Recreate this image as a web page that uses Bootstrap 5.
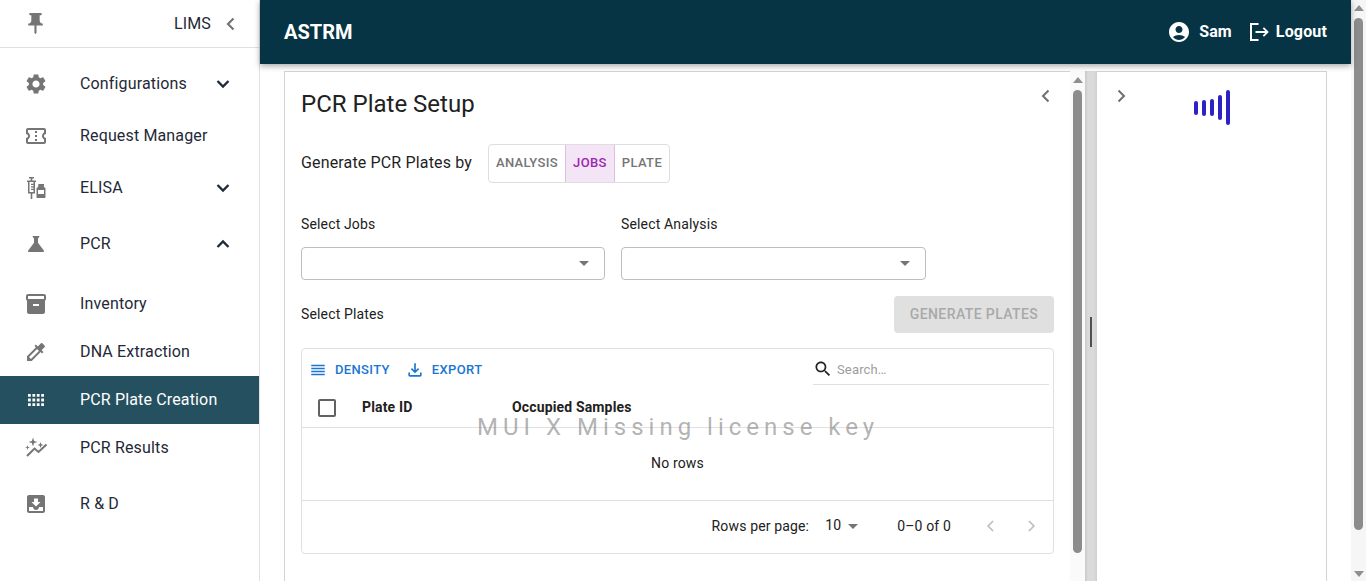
<!DOCTYPE html>
<html lang="en">
<head>
<meta charset="utf-8">
<title>ASTRM</title>
<link href="https://cdn.jsdelivr.net/npm/bootstrap@5.3.0/dist/css/bootstrap.min.css" rel="stylesheet">
<style>
html,body{height:581px;overflow:hidden;background:#fff}
body{font-family:Roboto,"Liberation Sans",sans-serif;color:#1f1f1f;font-size:16px;letter-spacing:.15px}
.shell{height:581px;width:1366px}
.side{width:260px;border-right:1px solid #e0e0e0;flex:none}
.side-top{height:48px;border-bottom:1px solid #e0e0e0;padding:0 16px 0 23px}
.lims{margin-left:auto;margin-right:8px;color:#1f2937}
.side-list{padding-top:10px}
.s-item{height:52px;padding:0 24px;color:#1f2937}
.s-item.h48{height:48px}
.s-item.h56{height:56px}
.s-item .lbl{margin-left:32px}
.s-item svg.ic{width:24px;height:24px;fill:#757575;flex:none}
.s-item .car{margin-left:auto;width:24px;height:24px;fill:none;stroke:#1f2937;stroke-width:2.3}
.s-item.on{background:#255060;color:#fff}
.s-item.on svg.ic{fill:#fff}
.gap-pcr{height:6px}
.gap-inv{height:12px}
.gap-rd{height:4px}
.rt{flex:1;min-width:0}
.topbar{height:64px;background:#073444;color:#fff;padding:0 24px;box-shadow:0 2px 6px rgba(0,0,0,.35);position:relative;z-index:2;font-weight:700}
.brand{font-size:20px;font-weight:700;letter-spacing:0}
.topbar svg{fill:#fff;flex:none}
.sam{margin-left:8px;margin-right:15px}
.out{margin-left:5px}
.pg-sb{width:15px;background:#f6f6f6;flex:none;padding-top:5px;position:relative}
.arw{width:0;height:0;border-left:5px solid transparent;border-right:5px solid transparent;border-bottom:6px solid #8f8f8f;margin:0 auto}
.arw-dn{position:absolute;left:3px;top:571px;width:0;height:0;border-left:5px solid transparent;border-right:5px solid transparent;border-top:6px solid #8f8f8f}
.pg-thumb{width:9px;height:512px;background:#8c8c8c;border-radius:5px;margin:7px auto 0}
.work{height:517px;overflow:hidden;padding:7px 24px 0}
.pane-l{width:786px;border:1px solid #d4d4d4;border-right:0;border-bottom:0;flex:none;height:510px;position:relative;padding:16px 16px 0}
.inner-sb{width:15px;background:#fafafa;flex:none;padding-top:6px}
.inner-thumb{width:9px;height:463px;background:#8c8c8c;border-radius:5px;margin:7px auto 0}
.splitter{width:12px;background:linear-gradient(90deg,#c9c9c9,#dadada 25%,#dadada 75%,#cfcfcf);flex:none}
.grip{width:2px;height:30px;background:#4f4f4f;margin-top:246px}
.pane-r{width:230px;border:1px solid #d4d4d4;border-left:0;border-bottom:0;flex:none;height:510px;position:relative;padding-top:16px}
.pane-title{font-size:24px;line-height:32px;color:#212121;margin:0;font-weight:400;letter-spacing:0}
.back{position:absolute;top:12px;right:12px;width:24px;height:24px;fill:none;stroke:#707070;stroke-width:2}
.back.fwd{left:12px;right:auto}
.by-row{margin-top:24px;height:39px;width:370px}
.by-txt{margin-top:-2px}
.toggle{border:1px solid #dedede;border-radius:4px;height:39px;margin-left:16px;overflow:hidden;flex:none}
.toggle span{font-size:13px;font-weight:500;letter-spacing:.35px;color:#757575;line-height:35px;display:block;text-align:center}
.toggle .t1{width:76px}
.toggle .t2{width:50px;background:#f3e5f5;color:#9c27b0;border-left:1px solid #dcbfe2;border-right:1px solid #dcbfe2}
.toggle .t3{width:54px}
.sel-row{margin-top:21px;gap:16px}
.sel-col{width:304px}
.sel-col.two{width:305px}
.sel-lbl{font-size:14px;line-height:40px;height:40px;margin-bottom:3px;color:#212121}
.fake-sel{height:33px;border:1px solid #bdbdbd;border-radius:4px;padding-right:15px}
.tri{width:0;height:0;border-left:5px solid transparent;border-right:5px solid transparent;border-top:5px solid #757575}
.gen-row{margin-top:16px;height:37px;width:753px}
.plates{font-size:14px;color:#212121}
.gen{background:#e0e0e0;color:#a9a9a9;font-size:14px;font-weight:500;letter-spacing:.4px;border:0;border-radius:4px;height:37px;width:160px;padding:0}
.gridbox{margin-top:15px;width:753px;height:206px;border:1px solid #e0e0e0;border-radius:4px;position:relative}
.tb{height:36px;padding:0 4px 0 7px}
.tb-btn{color:#1976d2;font-size:13px;font-weight:500;letter-spacing:.35px;margin-top:6px}
.tb-btn svg{fill:#1976d2;width:18px;height:18px;margin-right:8px}
.tb-btn svg.exp{width:20px;height:20px;margin:0 7px 0 -1px}
.srch{width:236px;height:36px;border-bottom:1px solid #e0e0e0;margin-left:auto;padding-top:7px;font-size:13px;color:#9e9e9e}
.srch svg{width:20px;height:20px;fill:#212121;margin-right:4px;margin-top:-2px}
.gh{height:43px;border-bottom:1px solid #e0e0e0;font-size:14px;font-weight:700;color:#212121;padding:4px 0 0 16px}
.gh-txt{margin-top:-2px}
.cb{width:18px;height:18px;border:2px solid #616161;border-radius:2px;flex:none}
.gh .c1{margin-left:26px;width:150px}
.norows{height:73px;border-bottom:1px solid #e0e0e0;font-size:14px;color:#212121;padding-bottom:2px}
.gf{height:52px;font-size:14px;color:#212121;padding:0 12px 2px 0}
.gf .rp{margin-left:auto}
.gf .ten{margin-left:16px;margin-top:-2px}
.gf .tri{margin-left:7px}
.gf .cnt{margin-left:39px}
.gf svg{width:20px;height:20px;fill:none;stroke:#bdbdbd;stroke-width:2}
.gf svg.pv{margin-left:30px}
.gf svg.nx{margin-left:20px}
.wm{position:absolute;left:175px;top:63px;font-size:24px;letter-spacing:5px;color:rgba(130,130,130,.62);white-space:nowrap;line-height:30px;font-weight:400;pointer-events:none}
.loader{position:absolute;left:97px;top:18px;gap:4px;align-items:center}
.loader i{display:block;width:4px;background:#2f22c2;border-radius:2px}
</style>
</head>
<body>
<div class="shell d-flex">
  <nav class="side">
    <div class="side-top d-flex align-items-center">
      <svg width="25" height="25" viewBox="0 0 24 24" fill="#757575"><path d="M16 9V4h1c.55 0 1-.45 1-1s-.45-1-1-1H7c-.55 0-1 .45-1 1s.45 1 1 1h1v5c0 1.660-1.340 3-3 3v2h5.970v7l1 1 1-1v-7H19v-2c-1.660 0-3-1.340-3-3z"/></svg>
      <span class="lims">LIMS</span>
      <svg width="24" height="24" viewBox="0 0 24 24" fill="none" stroke="#757575" stroke-width="2.200"><path d="M14.500 6.500l-5.500 5.500 5.500 5.500"/></svg>
    </div>
    <div class="side-list">
      <div class="s-item d-flex align-items-center">
        <svg class="ic" viewBox="0 0 24 24"><path d="M19.140 12.940c.04-.3.06-.61.06-.94 0-.32-.02-.64-.07-.94l2.030-1.580c.18-.14.23-.41.12-.61l-1.920-3.320c-.12-.22-.37-.29-.59-.22l-2.390.96c-.5-.38-1.030-.7-1.620-.94l-.36-2.540c-.04-.24-.24-.41-.48-.41h-3.840c-.24 0-.43.17-.47.41l-.36 2.540c-.59.24-1.130.57-1.620.94l-2.390-.96c-.22-.08-.47 0-.59.22L2.740 8.870c-.12.21-.08.47.12.61l2.030 1.580c-.05.3-.09.63-.09.94s.02.64.07.94l-2.030 1.580c-.18.14-.23.41-.12.61l1.920 3.320c.12.22.37.29.59.22l2.390-.96c.5.38 1.030.7 1.620.94l.36 2.540c.05.24.24.41.48.41h3.840c.24 0 .44-.17.47-.41l.36-2.540c.59-.24 1.130-.56 1.620-.94l2.390.96c.22.08.47 0 .59-.22l1.920-3.320c.12-.22.07-.47-.12-.61l-2.010-1.580zM12 15.600c-1.980 0-3.600-1.620-3.600-3.600s1.620-3.600 3.600-3.600 3.600 1.620 3.600 3.600-1.620 3.600-3.600 3.600z"/></svg>
        <span class="lbl">Configurations</span>
        <svg class="car" viewBox="0 0 24 24"><path d="M6.500 9l5.500 5.500L17.500 9"/></svg>
      </div>
      <div class="s-item d-flex align-items-center">
        <svg class="ic" viewBox="0 0 24 24"><path d="M22 10V6c0-1.100-.9-2-2-2H4c-1.100 0-1.990.9-1.990 2v4c1.100 0 1.990.9 1.990 2s-.89 2-2 2v4c0 1.100.9 2 2 2h16c1.100 0 2-.9 2-2v-4c-1.100 0-2-.9-2-2s.9-2 2-2zm-2-1.460c-1.190.69-2 1.990-2 3.460s.81 2.770 2 3.460V18H4v-2.540c1.190-.69 2-1.990 2-3.460 0-1.480-.8-2.770-1.990-3.460L4 6h16v2.540zM11 15h2v2h-2zm0-4h2v2h-2zm0-4h2v2h-2z"/></svg>
        <span class="lbl">Request Manager</span>
      </div>
      <div class="s-item d-flex align-items-center">
        <svg class="ic" viewBox="0 0 24 24"><path d="M5 1h5v1.500H8.300V4.500H12V6h-1v11.500H8.300V23H6.700v-5.500H4V6H3V4.500h3.700V2.500H5zM5.500 6v10h4v-2H7v-1.200h2.500v-1.300H7v-1.200h2.500V9H7V7.800h2.500V6zM14.500 8h5.500v2.500h-.5l2 1.800V21c0 .6-.4 1-1 1h-7c-.6 0-1-.4-1-1v-8.700l2-1.800h-.5zM14 14v4h6v-4z" fill-rule="evenodd"/></svg>
        <span class="lbl">ELISA</span>
        <svg class="car" viewBox="0 0 24 24"><path d="M6.500 9l5.500 5.500L17.500 9"/></svg>
      </div>
      <div class="gap-pcr"></div>
      <div class="s-item h48 d-flex align-items-center">
        <svg class="ic" viewBox="0 0 24 24"><path d="M19.800 18.400L14 10.670V6.500l1.350-1.690c.26-.33.030-.81-.39-.81H9.040c-.42 0-.65.48-.39.81L10 6.500v4.170L4.200 18.400c-.49.66-.02 1.600.8 1.600h14c.82 0 1.290-.94.800-1.600z"/></svg>
        <span class="lbl">PCR</span>
        <svg class="car" viewBox="0 0 24 24"><path d="M6.500 15l5.500-5.500 5.500 5.500"/></svg>
      </div>
      <div class="gap-inv"></div>
      <div class="s-item h48 d-flex align-items-center">
        <svg class="ic" viewBox="0 0 24 24"><path d="M20 2H4c-1 0-2 .9-2 2v3.010c0 .72.43 1.340 1 1.690V20c0 1.100 1.100 2 2 2h14c.9 0 2-.9 2-2V8.700c.57-.35 1-.97 1-1.690V4c0-1.100-1-2-2-2zm-5 12H9v-2h6v2zm5-7H4V4l16-.02V7z"/></svg>
        <span class="lbl">Inventory</span>
      </div>
      <div class="s-item h48 d-flex align-items-center">
        <svg class="ic" viewBox="0 0 24 24"><path d="M20.710 5.630l-2.340-2.340a.996.996 0 0 0-1.410 0l-3.120 3.120-1.930-1.910-1.410 1.410 1.420 1.420L3 16.250V21h4.750l8.920-8.920 1.420 1.420 1.410-1.410-1.920-1.920 3.120-3.120c.4-.4.400-1.030.010-1.420zM6.920 19L5 17.080l8.060-8.060 1.920 1.920L6.920 19z"/></svg>
        <span class="lbl">DNA Extraction</span>
      </div>
      <div class="s-item h48 on d-flex align-items-center">
        <svg class="ic" viewBox="0 0 24 24"><path d="M4 6h2.800v2.800H4zm4.400 0h2.800v2.800H8.400zm4.400 0h2.800v2.800h-2.800zM17.200 6H20v2.800h-2.800zM4 10.600h2.800v2.800H4zm4.400 0h2.800v2.800H8.400zm4.400 0h2.800v2.800h-2.800zm4.400 0H20v2.800h-2.800zM4 15.200h2.800V18H4zm4.400 0h2.800V18H8.400zm4.400 0h2.800V18h-2.800zm4.400 0H20V18h-2.800z"/></svg>
        <span class="lbl">PCR Plate Creation</span>
      </div>
      <div class="s-item h48 d-flex align-items-center">
        <svg class="ic" viewBox="0 0 24 24"><path d="M3 20l7.500-7.500 4 3.500L22.500 8.500" fill="none" stroke="#757575" stroke-width="2"/><path d="M9 1.500l1.100 3.400 3.400 1.100-3.400 1.100L9 10.500 7.900 7.100 4.500 6l3.400-1.100zM16.500 6l.8 2.200 2.200.8-2.200.8-.8 2.200-.8-2.200-2.200-.8 2.200-.8zM3.500 9l.6 1.900L6 11.500l-1.900.6-.6 1.900-.6-1.900-1.900-.6 1.900-.6z"/></svg>
        <span class="lbl">PCR Results</span>
      </div>
      <div class="gap-rd"></div>
      <div class="s-item h56 d-flex align-items-center">
        <svg class="ic" viewBox="0 0 24 24"><path d="M19 3H5c-1.100 0-2 .9-2 2v14c0 1.100.9 2 2 2h14c1.100 0 2-.9 2-2V5c0-1.100-.9-2-2-2z"/><path d="M5 15h4c0 1.660 1.350 3 3 3s3-1.340 3-3h4v4H5z" fill="#fff"/><path d="M10 6.500v3.500H7.500l4.500 4.500 4.500-4.500H14V6.500z" fill="#fff"/></svg>
        <span class="lbl">R &amp; D</span>
      </div>
    </div>
  </nav>
  <div class="rt d-flex flex-column">
    <header class="topbar d-flex align-items-center">
      <span class="brand">ASTRM</span>
      <svg class="ms-auto" width="24" height="24" viewBox="0 0 24 24"><path d="M12 2C6.480 2 2 6.480 2 12s4.480 10 10 10 10-4.480 10-10S17.520 2 12 2zm0 4c1.930 0 3.500 1.570 3.500 3.500S13.930 13 12 13s-3.500-1.570-3.500-3.500S10.070 6 12 6zm0 14c-2.030 0-4.430-.82-6.140-2.880C7.550 15.800 9.680 15 12 15s4.450.8 6.140 2.120C16.430 19.180 14.030 20 12 20z"/></svg>
      <span class="sam">Sam</span>
      <svg width="24" height="24" viewBox="0 0 24 24"><path d="M3 3h8.500v2H5v14h6.500v2H3zM17 7.200l4.800 4.800-4.800 4.800-1.300-1.300 2.600-2.600H8.500v-1.800h9.800l-2.600-2.600z"/></svg>
      <span class="out">Logout</span>
    </header>
    <div class="work d-flex">
      <section class="pane-l">
        <h1 class="pane-title">PCR Plate Setup</h1>
        <svg class="back" viewBox="0 0 24 24"><path d="M14.500 6.500l-5.500 5.500 5.500 5.500"/></svg>
        <div class="by-row d-flex align-items-center">
          <span class="by-txt">Generate PCR Plates by</span>
          <div class="toggle d-flex"><span class="t1">ANALYSIS</span><span class="t2">JOBS</span><span class="t3">PLATE</span></div>
        </div>
        <div class="sel-row d-flex">
          <div class="sel-col"><div class="sel-lbl">Select Jobs</div><div class="fake-sel d-flex align-items-center justify-content-end"><span class="tri"></span></div></div>
          <div class="sel-col two"><div class="sel-lbl">Select Analysis</div><div class="fake-sel d-flex align-items-center justify-content-end"><span class="tri"></span></div></div>
        </div>
        <div class="gen-row d-flex align-items-center justify-content-between">
          <span class="plates">Select Plates</span>
          <button class="gen" type="button" disabled>GENERATE PLATES</button>
        </div>
        <div class="gridbox">
          <div class="tb d-flex align-items-center">
            <span class="tb-btn d-flex align-items-center"><svg viewBox="0 0 24 24"><path d="M3 5h18v2H3zM3 9h18v2H3zM3 13h18v2H3zM3 17h18v2H3z"/></svg>DENSITY</span>
            <span class="tb-btn d-flex align-items-center ms-3"><svg class="exp" viewBox="0 0 24 24"><path d="M18 15v3H6v-3H4v3c0 1.100.9 2 2 2h12c1.100 0 2-.9 2-2v-3h-2zm-1-4l-1.410-1.410L13 12.170V4h-2v8.170L8.410 9.590 7 11l5 5 5-5z"/></svg>EXPORT</span>
            <div class="srch d-flex align-items-center"><svg viewBox="0 0 24 24"><path d="M15.500 14h-.79l-.28-.27C15.410 12.590 16 11.110 16 9.500 16 5.910 13.090 3 9.500 3S3 5.910 3 9.500 5.910 16 9.500 16c1.610 0 3.090-.59 4.230-1.570l.27.28v.79l5 4.990L20.490 19l-4.990-5zm-6 0C7.010 14 5 11.990 5 9.500S7.010 5 9.500 5 14 7.010 14 9.500 11.990 14 9.500 14z"/></svg>Search…</div>
          </div>
          <div class="gh d-flex align-items-center"><span class="cb"></span><span class="c1 gh-txt">Plate ID</span><span class="gh-txt">Occupied Samples</span></div>
          <div class="norows d-flex align-items-center justify-content-center">No rows</div>
          <div class="gf d-flex align-items-center">
            <span class="rp">Rows per page:</span><span class="ten">10</span><span class="tri"></span><span class="cnt">0–0 of 0</span>
            <svg class="pv" viewBox="0 0 24 24"><path d="M14.500 6l-6 6 6 6"/></svg>
            <svg class="nx" viewBox="0 0 24 24"><path d="M9.500 6l6 6-6 6"/></svg>
          </div>
          <div class="wm">MUI X Missing license key</div>
        </div>
      </section>
      <div class="inner-sb"><div class="arw"></div><div class="inner-thumb"></div></div>
      <div class="splitter d-flex justify-content-center"><div class="grip"></div></div>
      <aside class="pane-r">
        <svg class="back fwd" viewBox="0 0 24 24"><path d="M9.500 6.500l5.500 5.500-5.500 5.500"/></svg>
        <div class="loader d-flex"><i style="height:14px"></i><i style="height:16px"></i><i style="height:17px"></i><i style="height:25px"></i><i style="height:35px"></i></div>
      </aside>
    </div>
  </div>
  <div class="pg-sb"><div class="arw"></div><div class="pg-thumb"></div><div class="arw-dn"></div></div>
</div>
<script src="https://cdn.jsdelivr.net/npm/bootstrap@5.3.0/dist/js/bootstrap.bundle.min.js"></script>
</body>
</html>
